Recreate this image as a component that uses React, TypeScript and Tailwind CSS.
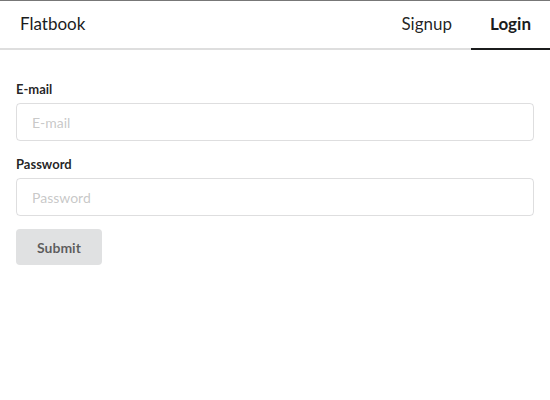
export default function App() {
  return (
    <div className="w-[550px] h-[400px] bg-white" style={{ fontFamily: "Lato, 'Helvetica Neue', Arial, sans-serif" }}>
      <div className="border-t border-t-[#777777] flex items-stretch h-[50px] border-b-2 border-b-[#dedede] text-[17px] leading-[17px] text-[#1b1c1d]">
        <div className="pt-[14px] pl-[20px] -mb-[2px]">Flatbook</div>
        <div className="ml-auto flex -mb-[2px]">
          <div className="pt-[14px] px-[19px] border-b-2 border-transparent text-[rgba(0,0,0,0.87)]">Signup</div>
          <div className="pt-[14px] px-[19px] border-b-2 border-[#1b1c1d] font-bold">Login</div>
        </div>
      </div>
      <div className="px-[16px] pt-[31px]">
        <div className="mb-[15px]">
          <div className="text-[13px] leading-[16px] font-bold text-[rgba(0,0,0,0.87)] mb-[6px]">E-mail</div>
          <input
            placeholder="E-mail"
            className="w-full h-[38px] border border-[rgba(34,36,38,0.15)] rounded-[4px] px-[15px] text-[14px] placeholder:text-[rgba(191,191,191,0.87)] outline-none"
          />
        </div>
        <div className="mb-[13px]">
          <div className="text-[13px] leading-[16px] font-bold text-[rgba(0,0,0,0.87)] mb-[6px]">Password</div>
          <input
            type="password"
            placeholder="Password"
            className="w-full h-[38px] border border-[rgba(34,36,38,0.15)] rounded-[4px] px-[15px] text-[14px] placeholder:text-[rgba(191,191,191,0.87)] outline-none"
          />
        </div>
        <button className="h-[36px] px-[21px] bg-[#e0e1e2] rounded-[4px] text-[14px] font-bold text-[rgba(0,0,0,0.6)]">
          Submit
        </button>
      </div>
    </div>
  );
}
